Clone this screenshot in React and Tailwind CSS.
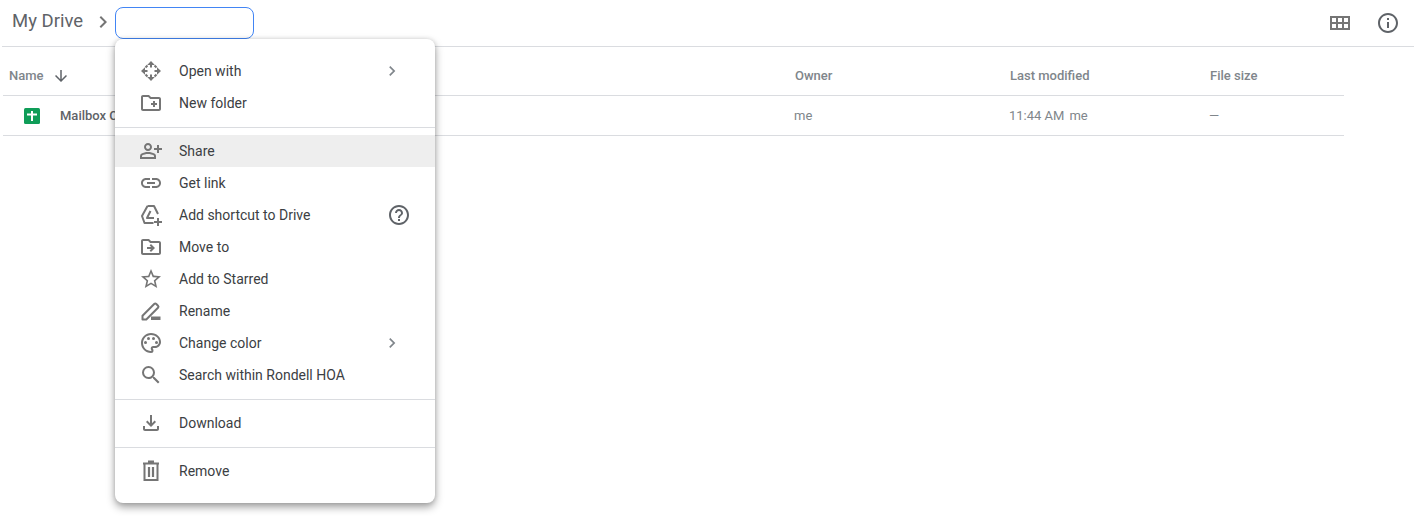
import {
  MdOutlineCreateNewFolder,
  MdOutlinePersonAddAlt,
  MdLink,
  MdOutlineDriveFileMove,
  MdStarBorder,
  MdOutlinePalette,
  MdSearch,
  MdOutlineFileDownload,
  MdHelpOutline,
  MdInfoOutline,
  MdChevronRight,
  MdArrowDownward,
} from 'react-icons/md'

function OpenWithIcon({ className }) {
  return (
    <svg className={className} viewBox="0 0 24 24" fill="none">
      <path d="M12 2 15.8 6h-7.6zM12 22l-3.8-4h7.6zM2 12l4-3.8v7.6zM22 12l-4 3.8V8.2z" fill="currentColor" />
      <path d="M12 5v3.5M12 15.5V19M5 12h3.5M15.5 12H19M8.5 6.5l-2 2M15.5 6.5l2 2M6.5 15.5l2 2M17.5 15.5l-2 2" stroke="currentColor" strokeWidth="2" />
    </svg>
  )
}

function ShortcutIcon({ className }) {
  return (
    <svg className={className} viewBox="0 0 24 24" fill="none" stroke="currentColor" strokeWidth="2" strokeLinejoin="round">
      <path d="M8.5 3h6.5l4 8M8.5 3 3 13l2.5 7h9" />
      <path d="M11.5 8 8 15h7" />
      <path d="M19 15v8M15 19h8" />
    </svg>
  )
}

function RenameIcon({ className }) {
  return (
    <svg className={className} viewBox="0 0 24 24" fill="none">
      <path d="M3.5 20.5v-3.8L15.2 5a1.5 1.5 0 0 1 2.1 0l1.7 1.7a1.5 1.5 0 0 1 0 2.1L7.3 20.5z" stroke="currentColor" strokeWidth="2" strokeLinejoin="round" />
      <path d="M12 17.5h9.5v3.5H12z" fill="currentColor" />
    </svg>
  )
}

function TrashIcon({ className }) {
  return (
    <svg className={className} viewBox="0 0 24 24" fill="none" stroke="currentColor">
      <path d="M5.5 5v16h13V5" strokeWidth="2" />
      <path d="M4 4.5h16M9 2.5h6" strokeWidth="2" />
      <path d="M10 8v10M14 8v10" strokeWidth="2.2" />
    </svg>
  )
}

const MENU_GROUPS = [
  [
    { label: 'Open with', icon: OpenWithIcon, more: true },
    { label: 'New folder', icon: MdOutlineCreateNewFolder },
  ],
  [
    { label: 'Share', icon: MdOutlinePersonAddAlt, active: true },
    { label: 'Get link', icon: MdLink },
    { label: 'Add shortcut to Drive', icon: ShortcutIcon, help: true },
    { label: 'Move to', icon: MdOutlineDriveFileMove },
    { label: 'Add to Starred', icon: MdStarBorder },
    { label: 'Rename', icon: RenameIcon },
    { label: 'Change color', icon: MdOutlinePalette, more: true },
    { label: 'Search within Rondell HOA', icon: MdSearch },
  ],
  [{ label: 'Download', icon: MdOutlineFileDownload }],
  [{ label: 'Remove', icon: TrashIcon }],
]

function GridIcon() {
  return (
    <svg width="20" height="14" viewBox="0 0 20 14">
      <path d="M0 0h20v14H0z M2 2v4h4V2z M8 2v4h4V2z M14 2v4h4V2z M2 8v4h4V8z M8 8v4h4V8z M14 8v4h4V8z" fill="#757575" fillRule="evenodd" />
    </svg>
  )
}

function SheetIcon() {
  return (
    <svg width="16" height="16" viewBox="0 0 16 16">
      <rect width="16" height="16" rx="1.5" fill="#0f9d58" />
      <path d="M3 5.5h4V3h2v2.5h4v2H9V13H7V7.5H3z" fill="#fff" />
    </svg>
  )
}

function MenuRow({ item }) {
  const Icon = item.icon
  return (
    <div className={`flex items-center h-8 pl-6 ${item.active ? 'bg-[#eeeeee]' : ''}`}>
      <Icon className="w-6 h-6 text-[#757575] shrink-0" />
      <span className="ml-4 text-[14px] text-[#3c4043]">{item.label}</span>
      {item.more && <MdChevronRight className="absolute left-[267px] w-5 h-5 text-[#80868b]" />}
      {item.help && <MdHelpOutline className="absolute left-[272px] w-6 h-6 text-[#5f6368]" />}
    </div>
  )
}

export default function App() {
  return (
    <div className="relative w-[1414px] h-[516px] overflow-hidden bg-white font-['Roboto',sans-serif]">
      <div className="flex items-center h-[47px] ml-[2px] border-b border-[#dadce0]">
        <span className="ml-[10px] text-[18.5px] text-[#5f6368] -translate-y-px">My Drive</span>
        <MdChevronRight className="ml-[8px] w-6 h-6 text-[#757575] -translate-y-px" />
        <div className="w-[139px] h-[32px] rounded-[8px] border border-[#4285f4]" />
        <div className="ml-auto flex items-center">
          <GridIcon />
          <MdInfoOutline className="ml-[26px] mr-[14px] w-6 h-6 text-[#5f6368]" />
        </div>
      </div>

      <div className="w-[1341px] ml-[3px]">
        <div className="flex items-center h-[49px] pt-[9px] border-b border-[#dadce0] text-[13px] font-medium text-[#80868b]">
          <div className="w-[792px] flex items-center pl-[6px]">
            <span>Name</span>
            <MdArrowDownward className="ml-[8px] w-[18px] h-[18px] text-[#5f6368]" />
          </div>
          <div className="w-[215px]">Owner</div>
          <div className="w-[200px]">Last modified</div>
          <div>File size</div>
        </div>
        <div className="flex items-center h-[40px] border-b border-[#dadce0] text-[13px] text-[#80868b]">
          <div className="w-[791px] flex items-center pl-[21px]">
            <SheetIcon />
            <span className="ml-[20px] font-medium text-[#5f6368]">Mailbox C</span>
          </div>
          <div className="w-[215px]">me</div>
          <div className="w-[200px] flex gap-[5px]">
            <span>11:44 AM</span>
            <span>me</span>
          </div>
          <div>—</div>
        </div>
      </div>

      <div className="absolute left-[115px] top-[39px] w-[320px] py-4 bg-white rounded-[8px] shadow-[0_4px_8px_rgba(0,0,0,0.38),0_0_4px_rgba(0,0,0,0.12)]">
        {MENU_GROUPS.map((group, i) => (
          <div key={i}>
            {i > 0 && <div className="mt-2 mb-[7px] h-px bg-[#dadce0]" />}
            {group.map((item) => (
              <MenuRow key={item.label} item={item} />
            ))}
          </div>
        ))}
      </div>
    </div>
  )
}
